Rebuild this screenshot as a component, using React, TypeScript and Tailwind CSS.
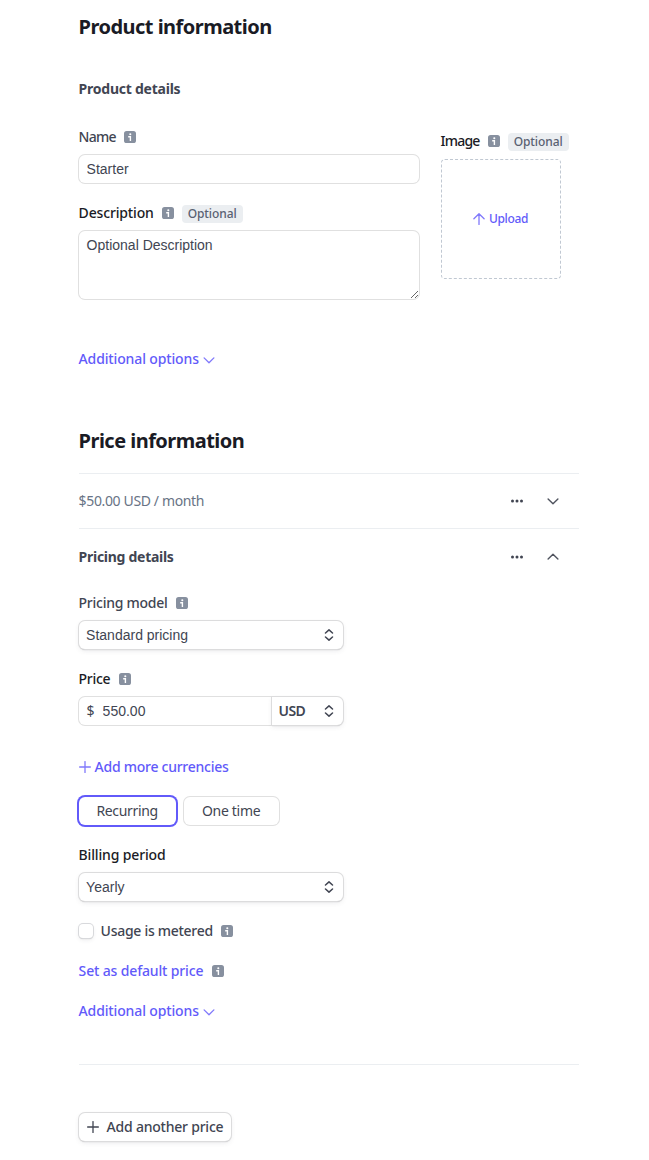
import type { ReactNode } from "react";
import clsx from "clsx";

const field = "rounded-[6px] bg-white shadow-[0_0_0_1px_#e0e0e0] font-['Liberation_Sans',sans-serif] text-[14px] leading-5 text-[#414552] outline-none";
const raised = "rounded-[6px] bg-white shadow-[0_0_0_1px_#dcdcdd,0_1px_1px_0_#b0b0b2,0_2px_5px_0_rgba(64,68,82,0.1)]";

function InfoIcon({ className }: { className?: string }) {
  return (
    <svg viewBox="0 0 12 12" className={clsx("size-3 shrink-0", className)}>
      <rect width="12" height="12" rx="2.6" fill="#87909f" />
      <circle cx="6.3" cy="3.3" r="1.05" fill="#fff" />
      <path d="M4.2 5.8H6.4V9.9" fill="none" stroke="#fff" strokeWidth="1.4" />
    </svg>
  );
}

function Chevron({ up, className }: { up?: boolean; className?: string }) {
  return (
    <svg viewBox="0 0 12 12" className={clsx("size-3 shrink-0", className)} fill="none" stroke="currentColor" strokeLinecap="round" strokeLinejoin="round">
      <path d={up ? "M1.1 8.1 6 3.2l4.9 4.9" : "M1.1 3.9 6 8.8l4.9-4.9"} />
    </svg>
  );
}

function Plus({ className }: { className?: string }) {
  return (
    <svg viewBox="0 0 12 12" className={clsx("size-3 shrink-0 stroke-[1.3]", className)} fill="none" stroke="currentColor" strokeLinecap="round">
      <path d="M6 .6v10.8M.6 6h10.8" />
    </svg>
  );
}

function SelectArrows() {
  return (
    <svg viewBox="0 0 12 12" className="size-3 shrink-0" fill="none" stroke="#414552" strokeWidth="1.5" strokeLinecap="round" strokeLinejoin="round">
      <path d="M2.5 4 6 .9 9.5 4M2.5 8 6 11.1 9.5 8" />
    </svg>
  );
}

function Label({ children, width, dark, info = true }: { children: ReactNode; width: string; dark?: boolean; info?: boolean }) {
  return (
    <div className={clsx("flex h-5 items-center font-medium", dark ? "text-[#1a1b25]" : "text-[#414552]")}>
      <span className={clsx("shrink-0 whitespace-nowrap", width)}>{children}</span>
      {info && <InfoIcon className="ml-2" />}
    </div>
  );
}

function Optional() {
  return (
    <span className="mt-0.5 ml-2 flex h-[18px] w-[61px] shrink-0 items-center justify-center rounded-[4px] bg-[#ebeef1] text-[12px] font-medium tracking-[-0.09px] text-[#596171]">
      Optional
    </span>
  );
}

function AdditionalOptions() {
  return (
    <button className="flex h-5 items-center font-medium tracking-[-0.14px] text-[#625afa]">
      <span className="w-[124px] shrink-0 text-left">Additional options</span>
      <Chevron className="mt-0.5 stroke-[1.3] text-[#8079fb]" />
    </button>
  );
}

function RowActions({ up }: { up?: boolean }) {
  return (
    <div className="mr-5 flex items-center gap-6 text-[#414552]">
      <svg viewBox="0 0 12 12" className="size-3" fill="currentColor">
        <circle cx="1.5" cy="6" r="1.5" />
        <circle cx="6" cy="6" r="1.5" />
        <circle cx="10.5" cy="6" r="1.5" />
      </svg>
      <Chevron up={up} className="stroke-[1.4] text-[#50545f]" />
    </div>
  );
}

function Select({ value }: { value: string }) {
  return (
    <div className={clsx("mt-2 flex h-7 w-[264px] items-center justify-between pr-2 pl-[7.5px]", raised)}>
      <span className="font-['Liberation_Sans',sans-serif] text-[14px]">{value}</span>
      <SelectArrows />
    </div>
  );
}

export default function App() {
  return (
    <main className="flex min-h-[1160px] flex-col bg-white pt-[13px] pl-[78.6px] font-['Noto_Sans',sans-serif] text-[14px] leading-5 text-[#414552]">
      <div className="flex w-[500px] flex-col items-start">
        <h1 className="text-[20px] leading-7 font-bold tracking-[-0.53px] text-[#1a1b25]">Product information</h1>
        <h2 className="mt-[38px] font-bold tracking-[-0.24px]">Product details</h2>

        <div className="mt-7 flex gap-[22px]">
          <div className="flex w-[340px] flex-col">
            <Label width="w-[37px] tracking-[-0.75px]">Name</Label>
            <input className={clsx("mt-2 h-7 px-2", field)} defaultValue="Starter" />
            <div className="mt-5 flex items-center">
              <Label dark width="w-[75px] tracking-[-0.15px]">Description</Label>
              <Optional />
            </div>
            <textarea className={clsx("mt-2 h-[68px] resize px-2 py-1", field)} defaultValue="Optional Description" />
          </div>
          <div className="mt-1 flex w-32 flex-col">
            <div className="flex items-center">
              <Label dark width="w-[39px] tracking-[-0.8px]">Image</Label>
              <Optional />
            </div>
            <button className="mt-2 flex size-[120px] items-center justify-center gap-1 rounded-[4px] border border-dashed border-[#c0c8d2] text-[12px] font-medium text-[#625afa]">
              <svg viewBox="0 0 12 12" className="size-3 shrink-0 text-[#8079fb]" fill="none" stroke="currentColor" strokeWidth="1.3" strokeLinecap="round" strokeLinejoin="round">
                <path d="M6 11.5V1M.9 5.8 6 .8l5.1 5" />
              </svg>
              <span className="w-10 tracking-[-0.32px]">Upload</span>
            </button>
          </div>
        </div>

        <div className="mt-[50px]">
          <AdditionalOptions />
        </div>

        <h1 className="mt-[58px] text-[20px] leading-7 font-bold tracking-[-0.53px] text-[#1a1b25]">Price information</h1>

        <div className="mt-[18px] flex h-[56px] w-full items-center justify-between border-y border-[#ebeef1]">
          <span className="tracking-[-0.36px] text-[#687385]">$50.00 USD / month</span>
          <RowActions />
        </div>
        <div className="mt-[18px] flex h-5 w-full items-center justify-between">
          <h2 className="font-bold tracking-[-0.28px]">Pricing details</h2>
          <RowActions up />
        </div>

        <div className="mt-[26px]">
          <Label width="w-[89px] tracking-[-0.26px]">Pricing model</Label>
          <Select value="Standard pricing" />
        </div>

        <div className="mt-5">
          <Label dark width="w-8 tracking-[-0.28px]">Price</Label>
          <div className="mt-2 flex h-7 w-[264px]">
            <div className={clsx("flex w-[192px] items-center rounded-r-none pl-2", field)}>
              <span className="w-4 font-['Noto_Sans',sans-serif] text-[14px]">$</span>
              <input className="w-40 outline-none" defaultValue="550.00" />
            </div>
            <div className={clsx("ml-px flex flex-1 items-center justify-between rounded-l-none pr-2 pl-[7px]", raised)}>
              <span className="font-semibold tracking-[-0.65px]">USD</span>
              <SelectArrows />
            </div>
          </div>
        </div>

        <button className="mt-8 flex h-5 items-center gap-1 font-medium text-[#625afa]">
          <Plus className="text-[#8079fb]" />
          <span className="tracking-[-0.26px]">Add more currencies</span>
        </button>

        <div className="mt-5 flex h-7 gap-2">
          <button className="w-[97px] rounded-[6px] tracking-[-0.34px] shadow-[0_0_0_2px_#625afa]">Recurring</button>
          <button className="w-[95px] rounded-[6px] tracking-[-0.3px] shadow-[0_0_0_1px_#e0e0e0]">One time</button>
        </div>

        <div className="mt-5">
          <Label dark info={false} width="w-[87px] tracking-[-0.15px]">Billing period</Label>
          <Select value="Yearly" />
        </div>

        <div className="mt-5 flex items-center gap-2">
          <span className="size-3.5 rounded-[4px] bg-white shadow-[0_0_0_1px_#d8d9dc,0_1px_1px_0_#c0c1c4,0_2px_4px_0_rgba(64,68,82,0.1)]" />
          <Label width="w-[112.5px] tracking-[-0.28px]">Usage is metered</Label>
        </div>

        <button className="mt-5 flex h-5 items-center font-medium text-[#625afa]">
          <span className="w-[125px] text-left tracking-[-0.15px]">Set as default price</span>
          <InfoIcon className="ml-2" />
        </button>

        <div className="mt-5">
          <AdditionalOptions />
        </div>

        <div className="mt-[43px] h-px w-full bg-[#ebeef1]" />

        <button className={clsx("mt-12 flex h-7 w-[152px] items-center gap-2 pl-2 font-medium", raised)}>
          <Plus />
          <span className="tracking-[-0.22px] whitespace-nowrap">Add another price</span>
        </button>
      </div>
    </main>
  );
}
